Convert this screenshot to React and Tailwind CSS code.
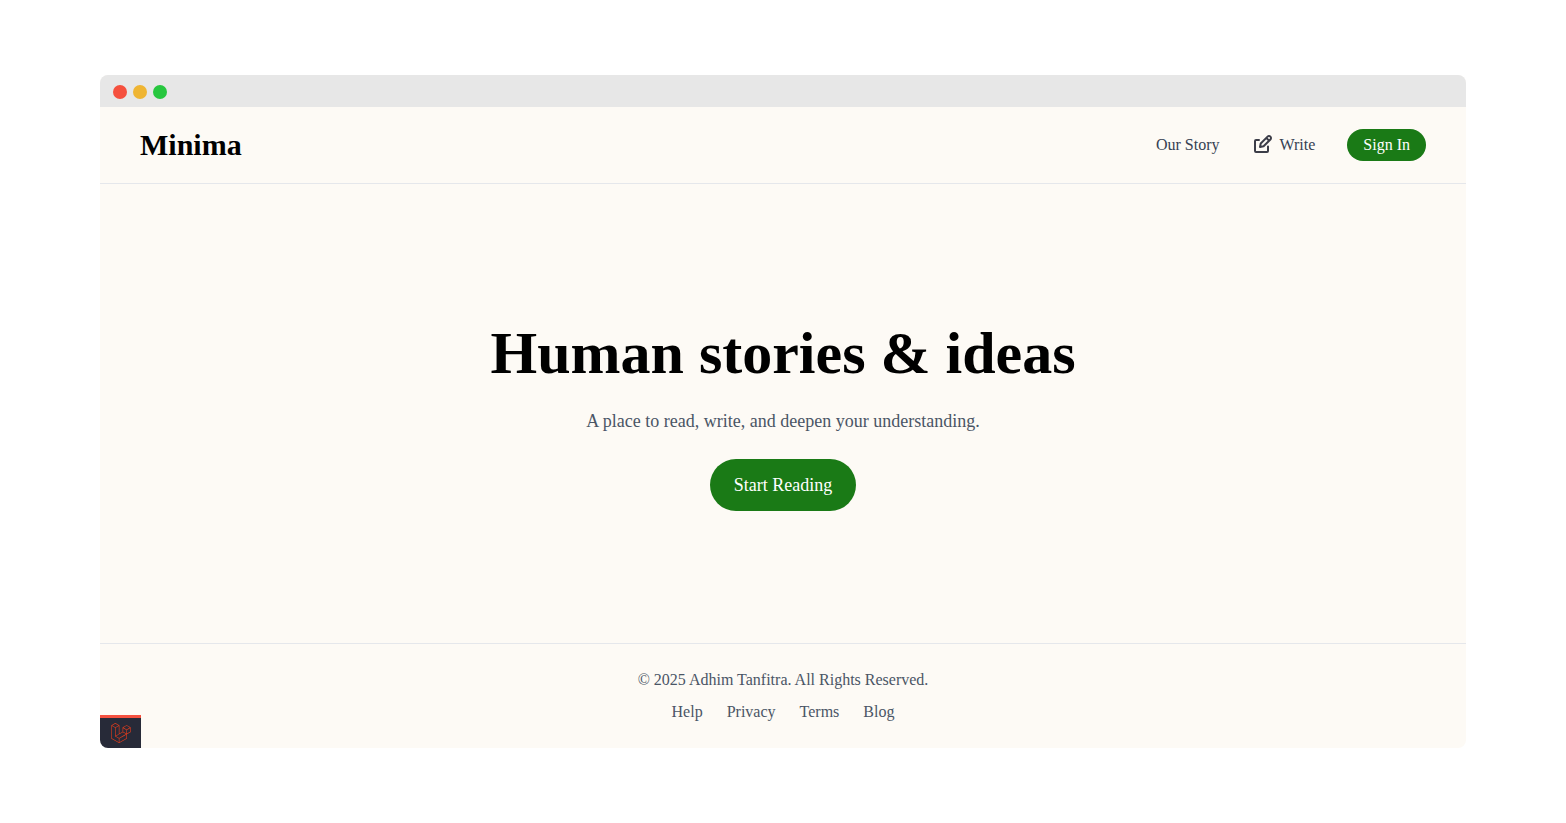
import { SiLaravel } from 'react-icons/si'

const footerLinks = ['Help', 'Privacy', 'Terms', 'Blog']

function EditIcon() {
  return (
    <svg
      className="w-6 h-6 text-[#3c3d48]"
      viewBox="0 0 24 24"
      fill="none"
      stroke="currentColor"
      strokeWidth="2"
      strokeLinecap="round"
      strokeLinejoin="round"
      aria-hidden="true"
    >
      <path d="m14.304 4.844 2.852 2.852M7 7H4a1 1 0 0 0-1 1v10a1 1 0 0 0 1 1h11a1 1 0 0 0 1-1v-4.5m2.409-9.91a2.017 2.017 0 0 1 0 2.853l-6.844 6.844L8 14l.713-3.565 6.844-6.844a2.015 2.015 0 0 1 2.852 0Z" />
    </svg>
  )
}

function TitleBar() {
  return (
    <div className="h-8 bg-[#e7e7e7] flex items-center gap-1.5 pl-[13px] pt-0.5 shrink-0">
      <span className="w-3.5 h-3.5 rounded-full bg-[#f5503e]" />
      <span className="w-3.5 h-3.5 rounded-full bg-[#efb533]" />
      <span className="w-3.5 h-3.5 rounded-full bg-[#27c73f]" />
    </div>
  )
}

function Header() {
  return (
    <header className="flex items-center justify-between px-10 py-5 border-b border-gray-200">
      <a href="#" className="text-3xl font-bold text-black">Minima</a>
      <nav className="flex items-center gap-8 text-gray-700">
        <a href="#story">Our Story</a>
        <a href="#write" className="flex items-center gap-1">
          <EditIcon /> Write
        </a>
        <button className="bg-[#1a7a16] text-white px-4 py-1 rounded-full">Sign In</button>
      </nav>
    </header>
  )
}

export default function App() {
  return (
    <div className="min-h-screen bg-white px-[100px] py-[75px] flex flex-col font-['Liberation_Serif',serif] text-base">
      <div className="relative flex-1 flex flex-col bg-[#fdfaf5] rounded-lg overflow-hidden">
        <TitleBar />
        <Header />

        <main className="flex-1 flex flex-col items-center justify-center gap-6 pt-1.5 text-center">
          <h1 className="text-6xl font-bold text-black">Human stories &amp; ideas</h1>
          <p className="text-lg text-gray-600">
            A place to read, write, and deepen your understanding.
          </p>
          <button className="bg-[#1a7a16] text-white text-lg px-6 py-3 rounded-full">
            Start Reading
          </button>
        </main>

        <footer className="border-t border-gray-200 py-6 flex flex-col items-center gap-2 text-gray-600">
          <p>© 2025 Adhim Tanfitra. All Rights Reserved.</p>
          <div className="flex gap-6">
            {footerLinks.map((link) => (
              <a key={link} href={`#${link.toLowerCase()}`}>{link}</a>
            ))}
          </div>
        </footer>

        {/* Collapsed debug bar, pinned to the window corner */}
        <button
          className="absolute left-0 bottom-0 w-[41px] h-[33px] bg-[#272a38] border-t-3 border-[#f4513f] flex items-center justify-center text-[#e03c1c]"
          title="Open debug bar"
        >
          <SiLaravel size={20} />
        </button>
      </div>
    </div>
  )
}
